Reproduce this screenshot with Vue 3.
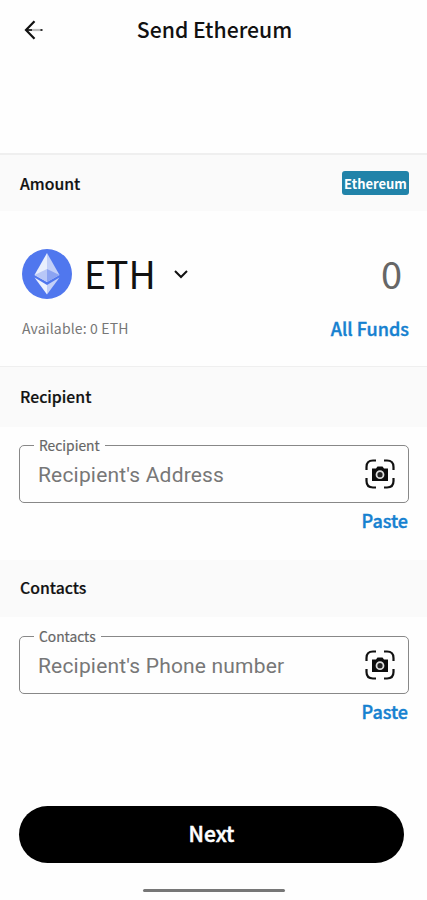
<script setup>
import { ref } from 'vue'

const amount = ref(0)

const fields = [
  { title: 'Recipient', placeholder: "Recipient's Address", name: 'recipient' },
  { title: 'Contacts', placeholder: "Recipient's Phone number", name: 'contacts' }
]
</script>

<template>
  <main class="screen">
    <header class="topbar">
      <svg class="back" viewBox="0 0 20 20">
        <path d="M2 10 H18.5" stroke="#333" stroke-width="2" />
        <path d="M8 10 H16.5" stroke="#bbb" stroke-width="2.2" />
        <path d="M10.5 1.2 L2 10 L10.5 18.8" fill="none" stroke="#111" stroke-width="2.2" />
      </svg>
      <h1 class="title">Send Ethereum</h1>
    </header>

    <section class="amount">
      <div class="section-bar amount-bar">
        <h2 class="section-title">Amount</h2>
        <span class="badge">Ethereum</span>
      </div>
      <div class="asset-row">
        <svg class="eth-logo" viewBox="0 0 50 50">
          <circle cx="25" cy="25" r="25" fill="#5077ee" />
          <path d="M25 4 L12.5 26 L25 33 Z" fill="#e9effd" />
          <path d="M25 4 L37.5 26 L25 33 Z" fill="#c3d0f8" />
          <path d="M25 20 L12.5 26 L25 33 Z" fill="#b8c7f7" />
          <path d="M25 20 L37.5 26 L25 33 Z" fill="#8ba3f2" />
          <path d="M12.5 28.5 L25 36 V45.5 Z" fill="#edf2fe" />
          <path d="M37.5 28.5 L25 36 V45.5 Z" fill="#c3d0f8" />
        </svg>
        <span class="symbol">ETH</span>
        <svg class="chevron" viewBox="0 0 16 10">
          <path d="M2 2 L8 8 L14 2" fill="none" stroke="#111" stroke-width="2" />
        </svg>
        <span class="value">{{ amount }}</span>
      </div>
      <div class="funds-row">
        <span class="available">Available: 0 ETH</span>
        <a class="action">All Funds</a>
      </div>
    </section>

    <section v-for="field in fields" :key="field.name" :class="['entry', field.name]">
      <div class="section-bar">
        <h2 class="section-title">{{ field.title }}</h2>
      </div>
      <div class="field">
        <span class="field-label">{{ field.title }}</span>
        <span class="placeholder">{{ field.placeholder }}</span>
        <svg class="scan" viewBox="0 0 30 30">
          <g fill="none" stroke="#111" stroke-width="2.2">
            <path d="M1.5 11 V8 Q1.5 1.5 8 1.5 H11" />
            <path d="M19 1.5 H22 Q28.5 1.5 28.5 8 V11" />
            <path d="M28.5 19 V22 Q28.5 28.5 22 28.5 H19" />
            <path d="M11 28.5 H8 Q1.5 28.5 1.5 22 V19" />
          </g>
          <path d="M7 9.5 H11 L12.5 7.5 H17.5 L19 9.5 H23 V22 H7 Z" fill="#0c0c0c" />
          <circle cx="15" cy="15.7" r="3.5" fill="#222" stroke="#ddd" stroke-width="1.8" />
        </svg>
      </div>
      <a class="action paste">Paste</a>
    </section>

    <button class="next">Next</button>
    <div class="home-indicator"></div>
  </main>
</template>

<style>
body {
  margin: 0;
  background: #fefefe;
}
</style>

<style scoped>
.screen {
  width: 427px;
  height: 900px;
  overflow: hidden;
  display: flex;
  flex-direction: column;
  background: #fefefe;
  color: #111;
  font-family: "Noto Sans CJK SC", "Noto Sans", sans-serif;
}

.topbar {
  display: grid;
  grid-template-columns: 68px 1fr 66px;
  align-items: center;
  height: 60px;
  margin-bottom: 93px;
}

.back {
  width: 20px;
  height: 20px;
  margin-left: 24px;
}

.title {
  margin: 0;
  padding-bottom: 2px;
  font-size: 21.2px;
  font-weight: 500;
  line-height: 30px;
  text-align: center;
  white-space: nowrap;
}

.section-bar {
  box-sizing: border-box;
  display: flex;
  align-items: center;
  justify-content: space-between;
  height: 61px;
  padding: 0 18px 0 20px;
  border-top: 1px solid #efefef;
  background: #fafafa;
}

.amount-bar {
  height: 58px;
  border-top-width: 2px;
}

.section-title {
  margin: 0;
  font-size: 15.8px;
  font-weight: 500;
  line-height: 24px;
  -webkit-text-stroke: 0.2px #111;
}

.amount-bar .section-title {
  padding-top: 2px;
}

.badge {
  display: flex;
  align-items: center;
  justify-content: center;
  width: 67px;
  height: 24px;
  border-radius: 3px;
  background: #2183a9;
  color: #fff;
  font-size: 13px;
  font-weight: 700;
}

.amount {
  height: 213px;
}

.asset-row {
  display: flex;
  align-items: center;
  height: 50px;
  margin-top: 38px;
  padding: 0 25px 0 22px;
}

.eth-logo {
  width: 50px;
  height: 50px;
}

.symbol {
  margin-left: 12px;
  padding-bottom: 3px;
  font-size: 37.5px;
  line-height: 47px;
}

.chevron {
  width: 16px;
  height: 10px;
  margin-left: 17px;
}

.value {
  margin-left: auto;
  padding-bottom: 2px;
  color: #666;
  font-size: 38px;
  line-height: 48px;
}

.funds-row {
  display: flex;
  align-items: center;
  justify-content: space-between;
  height: 30px;
  margin-top: 14px;
  padding: 0 18px 0 22px;
}

.available {
  color: #777;
  font-size: 14px;
  letter-spacing: 0.15px;
}

.action {
  color: #1681d0;
  font-size: 18px;
  font-weight: 500;
  line-height: 26px;
  -webkit-text-stroke: 0.4px #1681d0;
}

.entry {
  display: flex;
  flex-direction: column;
}

.recipient {
  height: 194px;
}

.contacts {
  height: 246px;
}

.contacts .section-bar {
  height: 57px;
  padding-bottom: 2px;
  border-top-color: #fafafa;
}

.field {
  position: relative;
  box-sizing: border-box;
  display: flex;
  align-items: center;
  justify-content: space-between;
  height: 58px;
  margin: 18px 18px 0 19px;
  padding: 0 13px 0 18px;
  border: 1px solid #888;
  border-radius: 5px;
}

.contacts .field {
  margin-top: 19px;
}

/* sits on the outline and cuts a gap in it */
.field-label {
  position: absolute;
  top: -11px;
  left: 14px;
  padding: 0 5px;
  background: #fefefe;
  color: #666;
  font-size: 13.8px;
  line-height: 20px;
  -webkit-text-stroke: 0.2px #666;
}

.placeholder {
  padding-top: 2px;
  color: #777;
  font-family: Roboto, sans-serif;
  font-size: 21px;
  letter-spacing: 0.18px;
}

.scan {
  width: 30px;
  height: 30px;
}

.paste {
  align-self: flex-end;
  margin: 4px 19px 0 0;
}

.next {
  width: 385px;
  height: 57px;
  margin-left: 19px;
  padding: 0 0 3px;
  border: 0;
  border-radius: 29px;
  background: #000;
  color: #fff;
  font-family: inherit;
  font-size: 21px;
  font-weight: 500;
  -webkit-text-stroke: 0.5px #fff;
}

.home-indicator {
  width: 142px;
  height: 3px;
  margin: 26px 0 0 143px;
  border-radius: 2px;
  background: #777;
}
</style>
